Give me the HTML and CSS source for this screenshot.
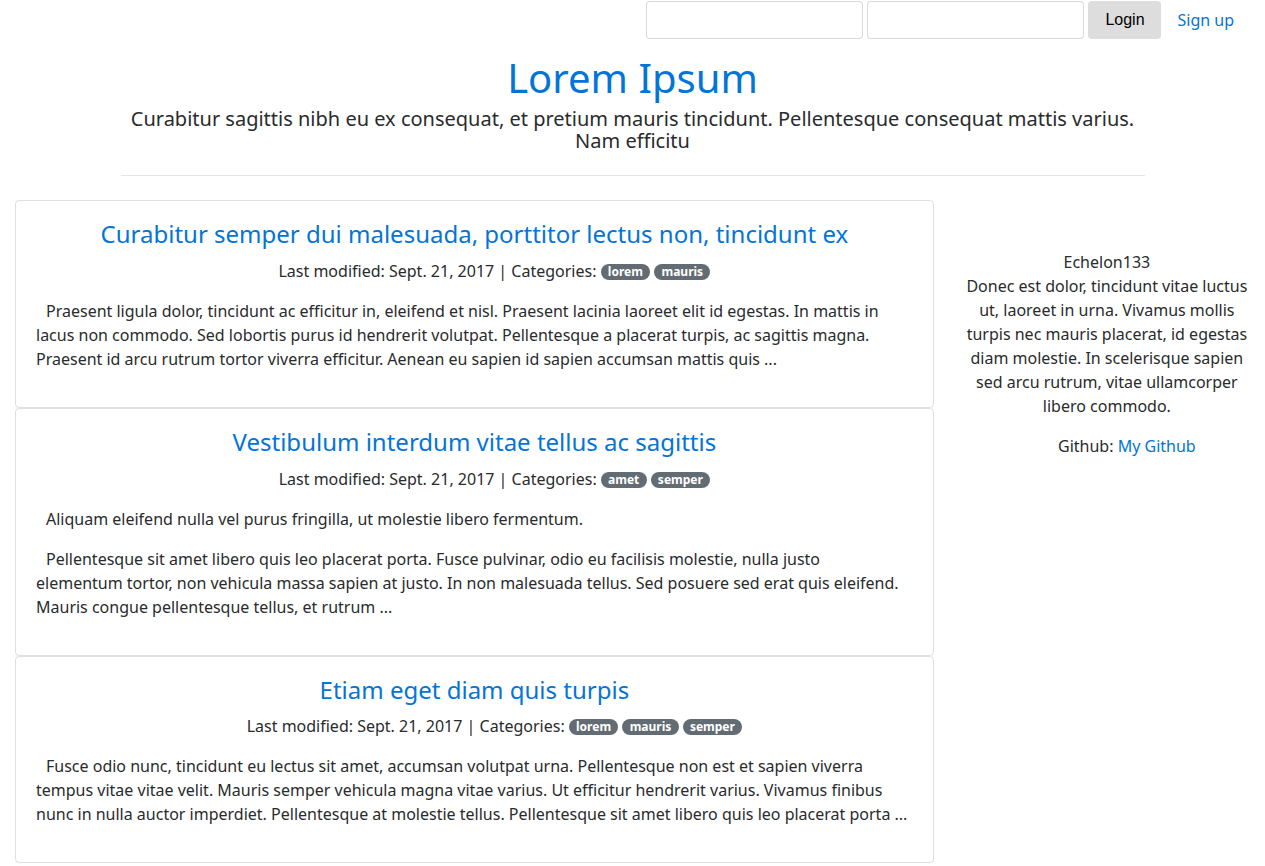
FILE: index.html
```html
<!DOCTYPE html>
<html lang="en">
<head>
<meta charset="utf-8">
<title>Lorem Ipsum</title>
<link rel="stylesheet" href="styles.css">
</head>
<body>
<nav class="topnav">
  <form class="login-form">
    <input class="field" type="text" aria-label="Username">
    <input class="field" type="password" aria-label="Password">
    <button class="login-btn" type="button">Login</button>
  </form>
  <a class="signup" href="#">Sign up</a>
</nav>

<header class="header">
  <h1 class="site-title">Lorem Ipsum</h1>
  <p class="site-lead">Curabitur sagittis nibh eu ex consequat, et pretium mauris tincidunt. Pellentesque consequat mattis varius. Nam efficitu</p>
  <hr class="divider">
</header>

<div class="layout">
  <main class="posts">
    <article class="card">
      <h4 class="card-title"><a href="#">Curabitur semper dui malesuada, porttitor lectus non, tincidunt ex</a></h4>
      <p class="meta">Last modified: Sept. 21, 2017 | Categories: <span class="badge">lorem</span> <span class="badge">mauris</span></p>
      <p class="excerpt">Praesent ligula dolor, tincidunt ac efficitur in, eleifend et nisl. Praesent lacinia laoreet elit id egestas. In mattis in lacus non commodo. Sed lobortis purus id hendrerit volutpat. Pellentesque a placerat turpis, ac sagittis magna. Praesent id arcu rutrum tortor viverra efficitur. Aenean eu sapien id sapien accumsan mattis quis ...</p>
    </article>
    <article class="card">
      <h4 class="card-title"><a href="#">Vestibulum interdum vitae tellus ac sagittis</a></h4>
      <p class="meta">Last modified: Sept. 21, 2017 | Categories: <span class="badge">amet</span> <span class="badge">semper</span></p>
      <p class="excerpt">Aliquam eleifend nulla vel purus fringilla, ut molestie libero fermentum.</p>
      <p class="excerpt">Pellentesque sit amet libero quis leo placerat porta. Fusce pulvinar, odio eu facilisis molestie, nulla justo elementum tortor, non vehicula massa sapien at justo. In non malesuada tellus. Sed posuere sed erat quis eleifend. Mauris congue pellentesque tellus, et rutrum ...</p>
    </article>
    <article class="card">
      <h4 class="card-title"><a href="#">Etiam eget diam quis turpis</a></h4>
      <p class="meta">Last modified: Sept. 21, 2017 | Categories: <span class="badge">lorem</span> <span class="badge">mauris</span> <span class="badge">semper</span></p>
      <p class="excerpt">Fusce odio nunc, tincidunt eu lectus sit amet, accumsan volutpat urna. Pellentesque non est et sapien viverra tempus vitae vitae velit. Mauris semper vehicula magna vitae varius. Ut efficitur hendrerit varius. Vivamus finibus nunc in nulla auctor imperdiet. Pellentesque at molestie tellus. Pellentesque sit amet libero quis leo placerat porta ...</p>
    </article>
  </main>
  <aside class="sidebar">
    <p class="about">Echelon133<br>Donec est dolor, tincidunt vitae luctus ut, laoreet in urna. Vivamus mollis turpis nec mauris placerat, id egestas diam molestie. In scelerisque sapien sed arcu rutrum, vitae ullamcorper libero commodo.</p>
    <p class="about about-links">Github: <a href="#">My Github</a></p>
  </aside>
</div>
</body>
</html>
```

FILE: styles.css
```css
* { box-sizing: border-box; }

html, body {
  margin: 0;
  padding: 0;
}

body {
  font-family: "Noto Sans", "Liberation Sans", sans-serif;
  font-size: 16px;
  line-height: 1.5;
  color: #292b2c;
  background: #fff;
}

a {
  color: #0275d8;
  text-decoration: none;
}

.topnav {
  display: flex;
  justify-content: flex-end;
  align-items: center;
  padding: 1px 15px 0 15px;
}

.login-form {
  display: flex;
  align-items: center;
  gap: 4px;
  margin: 0;
}

.field {
  width: 217px;
  height: 38px;
  border: 1px solid rgba(0, 0, 0, 0.15);
  border-radius: 4px;
  background: #fff;
  padding: 6px 12px;
  font: inherit;
}

.login-btn {
  width: 73px;
  height: 38px;
  border: none;
  border-radius: 4px;
  background: #dddddd;
  color: #000;
  font-family: "Liberation Sans", Arial, sans-serif;
  font-size: 16px;
  padding: 0;
}

.signup {
  display: block;
  padding: 6px 16px;
  line-height: 24px;
}

.header {
  margin: 0 auto;
  width: 1024px;
  text-align: center;
}

.site-title {
  margin: 15px 0 0;
  font-size: 40px;
  font-weight: 400;
  line-height: 1.2;
  color: #0275d8;
}

.site-lead {
  margin: 6px 0 0;
  font-size: 20px;
  line-height: 22px;
}

.divider {
  margin: 23px 0 24px;
  border: 0;
  border-top: 1px solid rgba(0, 0, 0, 0.1);
}

.layout {
  display: grid;
  grid-template-columns: 75% 25%;
}

.posts {
  padding: 0 0 0 15px;
  margin-right: 15px;
}

.card {
  border: 1px solid rgba(0, 0, 0, 0.125);
  border-radius: 4px;
  padding: 20px;
  text-align: center;
}

.card-title {
  margin: -1px 0 9px;
  font-size: 24px;
  font-weight: 400;
  line-height: 1.2;
}

.meta {
  margin: 0 0 16px;
  padding: 1px 0 0 40px;
  line-height: 24px;
}

.badge {
  display: inline-block;
  padding: 0 7.2px;
  font-size: 12px;
  font-weight: 700;
  line-height: 16px;
  color: #fff;
  background: #636c72;
  border-radius: 10rem;
  vertical-align: 1px;
}

.excerpt {
  margin: 0 0 16px;
  padding-right: 3px;
  text-align: left;
  text-indent: 10px;
}

.sidebar {
  padding: 50px 15px 0;
  text-align: center;
}

.about {
  margin: 0 0 16px;
}

.about-links {
  padding-left: 40px;
}
```
